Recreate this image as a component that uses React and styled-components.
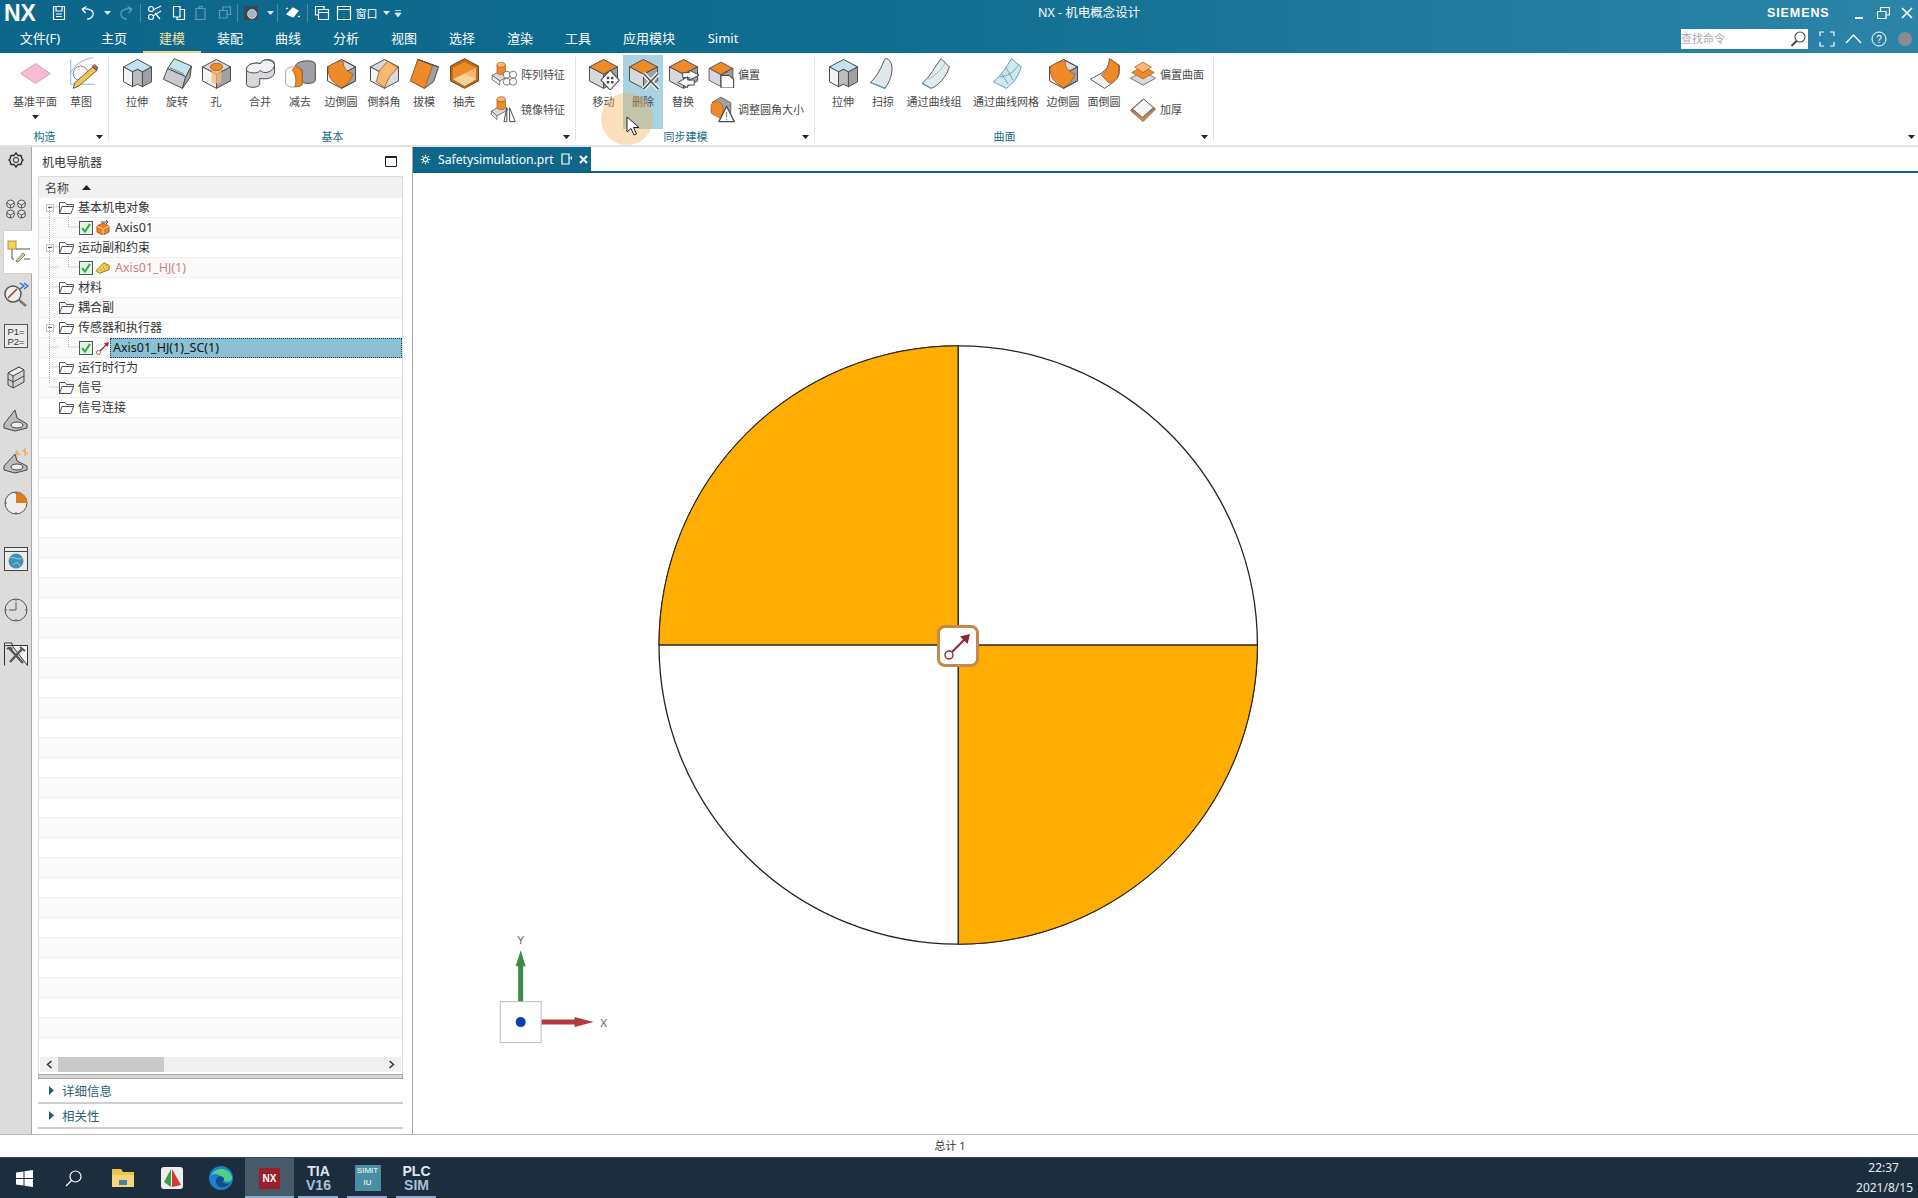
import React from 'react';
import styled, { createGlobalStyle } from 'styled-components';

const FONT = '"Noto Sans", "Noto Sans CJK SC", sans-serif';

const Global = createGlobalStyle`
  html, body { margin: 0; padding: 0; background: #fff; overflow: hidden; }
  body { font-family: ${FONT}; }
  * { box-sizing: border-box; }
`;

const Page = styled.div`
  width: 1918px; height: 1198px; display: flex; flex-direction: column; overflow: hidden;
`;
const Header = styled.header`
  height: 53px; flex: none; color: #fff;
  background: linear-gradient(90deg, #0c668a 0%, #106d90 45%, #2c85a8 100%);
`;
const TitleRow = styled.div`
  height: 26px; display: flex; align-items: center; position: relative;
`;
const Logo = styled.span`
  font: 700 23px/26px "Liberation Sans", sans-serif; width: 44px; padding-left: 4px; flex: none;
`;
const QuickSlot = styled.span`
  width: ${p => p.$w}px; flex: none; display: flex; align-items: center; justify-content: center;
  opacity: ${p => p.$dim ? 0.35 : 1}; font-size: 11px;
`;
const QuickSep = styled.i`
  width: 1px; height: 18px; background: rgba(255,255,255,.25); flex: none;
`;
const AppTitle = styled.span`
  font-size: 12.5px; line-height: 20px; width: 340px; flex: none; white-space: nowrap;
`;
const Brand = styled.span`
  font: 700 12.5px/20px "Liberation Sans", sans-serif; letter-spacing: .9px; width: 80px; flex: none;
`;
const WinBtn = styled.span`
  width: 24px; flex: none; display: flex; justify-content: center; align-items: center;
`;
const TabRow = styled.nav`
  height: 27px; display: flex; padding-left: 11px; align-items: stretch;
`;
const MenuTab = styled.span`
  width: ${p => p.$w || 58}px; margin-right: ${p => p.$mr || 0}px; flex: none; text-align: center;
  font-size: 13px; line-height: 25px; color: ${p => p.$on ? '#f2e2a0' : '#fff'};
  border-bottom: 2px solid ${p => p.$on ? '#e8d98f' : 'transparent'};
`;
const RightTools = styled.div`
  margin-left: auto; display: flex; align-items: center; height: 26px;
`;
const Search = styled.div`
  width: 127px; height: 20px; background: #fff; color: #aaa; font-size: 11px; line-height: 20px;
  display: flex; justify-content: space-between; align-items: center; margin-right: 6px; padding-right: 2px;
`;
const ToolIcon = styled.span`
  width: ${p => p.$w}px; flex: none; display: flex; justify-content: center; align-items: center;
`;
const Ribbon = styled.section`
  height: 94px; flex: none; display: flex; background: #fff; position: relative;
  border-bottom: 2px solid #e2e2e2;
`;
const Group = styled.div`
  width: ${p => p.$w}px; flex: none; display: flex; flex-direction: column; position: relative;
`;
const GroupRow = styled.div`
  height: 76px; display: flex; padding-left: ${p => p.$pl}px;
`;
const GroupFoot = styled.div`
  height: 16px; display: flex; align-items: center;
`;
const GroupLabel = styled.span`
  flex: 1; text-align: center; font-size: 11px; line-height: 16px; color: #1d6c86;
`;
const GroupDrop = styled.span`
  width: 20px; flex: none; display: flex; justify-content: center;
`;
const GroupSep = styled.i`
  position: absolute; right: 0; top: 4px; bottom: 4px; width: 1px; background: #e2e2e2;
`;
const BigBtn = styled.div`
  width: ${p => p.$w}px; flex: none; display: flex; flex-direction: column; align-items: center;
  padding-top: ${p => p.$hl ? 2 : 4}px; height: 74px; background: ${p => p.$hl ? '#a9d3e1' : 'transparent'};
  margin-top: ${p => p.$hl ? 2 : 0}px;
  font-size: 11px; line-height: 14px; color: #4a4a4a; white-space: nowrap;
  & > svg:first-child { flex: none; margin-bottom: 5px; }
`;
const BtnDrop = styled.span`
  display: flex; margin-top: 6px;
`;
const SideCol = styled.div`
  margin-left: ${p => p.$ml || 0}px; display: flex; flex-direction: column; gap: 6px; padding-top: 6px;
`;
const SideBtn = styled.div`
  display: flex; align-items: center; gap: 3px; height: 29px;
  font-size: 11px; color: #4a4a4a; white-space: nowrap;
`;
const CursorSpot = styled.i`
  position: absolute; left: 601px; top: 40px; width: 52px; height: 52px; border-radius: 50%;
  background: rgba(240,172,80,.38); z-index: 3;
`;
const CursorMark = styled.svg`
  position: absolute; left: 626px; top: 63px; z-index: 4;
`;
const RibbonDrop = styled.span`
  position: absolute; right: 3px; bottom: 6px; display: flex;
`;
const Main = styled.main`
  flex: 1; display: flex; min-height: 0;
`;
const Rail = styled.aside`
  width: 32px; flex: none; background: #dcdcdc; border-right: 1px solid #a8a8a8;
  display: flex; flex-direction: column; border-bottom: 1px solid #b8b8b8;
`;
const RailItem = styled.div`
  height: ${p => p.$h || 30}px; margin-top: ${p => p.$mt}px; flex: none;
  display: flex; align-items: center; justify-content: center;
  ${p => p.$on && 'background:#fff; margin-left:3px; margin-right:-1px; border:1px solid #cfcfcf; border-right:none;'}
`;
const NavPanel = styled.section`
  width: 381px; flex: none; background: #fff; border-right: 1px solid #a8a8a8; border-bottom: 1px solid #b8b8b8;
  display: flex; flex-direction: column; padding-bottom: 5px;
`;
const NavHead = styled.div`
  height: 29px; flex: none; display: flex; justify-content: space-between; align-items: center;
  padding: 0 15px 0 10px; font-size: 12px; color: #333;
`;
const Tree = styled.div`
  margin: 0 9px 0 6px; flex: 1; min-height: 0; display: flex; flex-direction: column;
  border: 1px solid #dcdcdc; border-bottom: none;
`;
const TreeHead = styled.div`
  height: 21px; flex: none; background: #f1f1f1; display: flex; align-items: center; gap: 13px;
  padding-left: 6px; font-size: 12px; color: #444;
`;
const TreeBody = styled.div`
  flex: 1; min-height: 0; overflow: hidden; position: relative;
`;
const TreeRow = styled.div`
  height: 20px; display: flex; align-items: center; position: relative;
  background: ${p => p.$odd ? '#fafafa' : '#fff'}; border-bottom: 1px solid #eeeeee;
  padding-left: ${p => p.$lvl ? 40 : 20}px; font-size: 12px; color: #333; white-space: nowrap;
`;
const Expander = styled.i`
  position: absolute; left: 7px; top: 6px; width: 8px; height: 8px; background: #fff;
  border: 1px solid #c4c4c4; font-style: normal;
  &::after { content: ''; position: absolute; left: 1px; top: 2px; width: 4px; height: 1px; background: #444; }
`;
const TreeIcon = styled.span`
  width: 14px; margin-left: 3px; flex: none; display: flex; justify-content: center;
`;
const RowLabel = styled.span`
  margin-left: ${p => p.$lvl ? 5 : 4}px; color: ${p => p.$red ? '#d67a82' : '#333'}; line-height: 20px; padding-right: 4px;
  font-size: ${p => p.$lvl ? 12.5 : 12}px;
`;
const SelFill = styled.span`
  position: absolute; left: 71px; right: 0; top: 0; bottom: -1px; background: #8cc0d4;
  border: 1px dotted #24424f; padding-left: 2px; color: #111; line-height: 18px; font-size: 12.5px;
`;
const TreeLines = styled.svg`
  position: absolute; left: 0; top: 0; pointer-events: none; z-index: 2;
`;
const HScroll = styled.div`
  height: 15px; margin: 2px 1px 2px 1px; flex: none; background: #f0f0f2; display: flex; align-items: center;
  justify-content: space-between; padding: 0 6px; position: relative;
`;
const Thumb = styled.i`
  position: absolute; left: 18px; width: 106px; top: 0; bottom: 0; background: #c9c9cc;
`;
const Splitter = styled.div`
  height: 5px; flex: none; margin: 0 9px 0 6px; background: #d6d6d6; border: 1px solid #a9a9a9;
`;
const Acc = styled.div`
  height: ${p => p.$h}px; flex: none; margin: 0 9px 0 6px; border-bottom: 2px solid #cfcfcf;
  display: flex; align-items: center; gap: 8px; padding-left: 11px;
  font-size: 12.5px; color: #2f6478;
`;
const Graphic = styled.section`
  flex: 1; display: flex; flex-direction: column; min-width: 0; background: #fff; border-bottom: 1px solid #b8b8b8;
`;
const DocStrip = styled.div`
  height: 26px; flex: none; border-bottom: 2px solid #0f5f7e; display: flex; align-items: flex-start;
`;
const DocTab = styled.div`
  width: 178px; height: 24px; background: #0f678a; color: #fff; font-size: 12.2px; display: flex;
  align-items: center; padding-left: 7px; gap: 7px; white-space: nowrap;
`;
const Viewport = styled.div`
  flex: 1; min-height: 0; position: relative;
`;
const ModelSvg = styled.svg`
  display: block; width: 100%; height: 100%;
`;
const Marker = styled.div`
  position: absolute; left: 524px; top: 452px; width: 42px; height: 42px; background: #fff;
  border: 3px solid #c38a4c; border-radius: 8px; display: flex; align-items: center; justify-content: center;
`;
const Status = styled.footer`
  height: 22px; flex: none; background: #fff; text-align: center; padding-right: 18px;
  font-size: 11px; line-height: 21px; color: #333;
`;
const Taskbar = styled.div`
  height: 41px; flex: none; background: #1c2d3e; display: flex; align-items: stretch; color: #fff;
  border-top: 1px solid #33465a;
`;
const TaskSlot = styled.div`
  width: 49px; flex: none; display: flex; align-items: center; justify-content: center; position: relative;
  background: ${p => p.$on ? '#465a68' : 'transparent'};
  ${p => p.$open && `&::after{content:'';position:absolute;left:${p.$on ? 0 : 4}px;right:${p.$on ? 0 : 5}px;bottom:0;height:2px;background:#8fa9cf;}`}
`;
const NxBadge = styled.span`
  width: 21px; height: 21px; background: #9a1f2b; font: 700 10px/21px "Liberation Sans", sans-serif; text-align: center; color: #fff;
`;
const StackText = styled.span`
  display: flex; flex-direction: column; align-items: center; font: 700 ${p => p.$s || 12}px/${p => p.$s || 12}px "Liberation Sans", sans-serif;
  color: ${p => p.$c || '#dfe7f0'};
  & b { color: #a9bfdc; }
`;
const SimitTile = styled.span`
  width: 26px; height: 26px; background: #4b8ea3; font: 400 8px/12px "Liberation Sans", sans-serif; color: #fff; text-align: center;
`;
const Clock = styled.div`
  margin-left: auto; padding: 0 5px 0 0; display: flex; flex-direction: column; align-items: flex-end; justify-content: center;
  font-size: 12px; line-height: 20px; color: #e8edf2;
  & span:first-child { padding-right: 14px; }
`;

/* ---------- drawings ---------- */
const O = '#ee8a28', OL = '#f7b873', G = '#d8d9dc', GD = '#9fa0a6', W = '#f2f3f5', B = '#c2e4ee', L = '#4b4b4b';

const I = ({ s = 33, children, v = '0 0 40 40' }) => (
  <svg width={s} height={s} viewBox={v} fill="none" strokeLinejoin="round">{children}</svg>
);
const Box = ({ t = G, l = W, r = GD }) => (
  <g stroke={L} strokeWidth="1.2">
    <path d="M20 3 37 12 20 21 3 12Z" fill={t} />
    <path d="M3 12 20 21V38L3 29Z" fill={l} />
    <path d="M37 12 20 21V38L37 29Z" fill={r} />
  </g>
);

const Extrude = ({ s }) => (
  <I s={s}><g stroke={L} strokeWidth="1.2">
    <path d="M20 3 37 12 26 18 20 15 14 18 3 12Z" fill={B} />
    <path d="M3 12 14 18V36L3 30Z" fill={W} />
    <path d="M14 18 20 15 26 18V36L20 33 14 36Z" fill="#bcbdc2" />
    <path d="M26 18 37 12V30L26 36Z" fill={GD} />
  </g></I>
);
const Revolve = () => (
  <I><g stroke={L} strokeWidth="1.2">
    <path d="M16 2 37 11 30 24 8 14Z" fill={B} />
    <path d="M8 14 30 24 26 38 3 27Z" fill="#c9cacd" />
    <path d="M30 24 37 11 35 25 26 38Z" fill={GD} />
    <path d="M11 13 28 21" stroke="#7a7a7a" />
  </g></I>
);
const Hole = () => (
  <I><Box />
    <path d="M14 13V30C17 33 23 33 26 30V13Z" fill={OL} opacity=".75" />
    <ellipse cx="20" cy="12" rx="7.5" ry="4.5" fill={O} stroke="#a65a12" /></I>
);
const Unite = () => (
  <I><g stroke={L} strokeWidth="1.2">
    <path d="M3 15V33C3 38 18 38 19 33V26C30 28 37 24 37 18V8C37 2 22 1 20 8 12 6 3 9 3 15Z" fill={G} />
    <path d="M3 15C3 20 18 21 20 16 23 22 37 18 37 9C35 3 22 1 20 8 12 6 3 9 3 15Z" fill={W} />
  </g></I>
);
const Subtract = () => (
  <I><g strokeWidth="1.2">
    <ellipse cx="11" cy="17" rx="9" ry="5" stroke="#aaa" fill="#fff" />
    <path d="M2 17V32C2 38 20 38 20 32V17" stroke="#aaa" fill="#fff" />
    <path d="M14 11C14 4 38 2 38 9V28C38 33 24 33 22 30V17C22 13 15 14 14 11Z" fill={GD} stroke={L} />
    <path d="M14 11C20 14 22 15 22 20V34C19 36 15 36 13 36 16 30 14 20 10 16Z" fill={O} stroke="#b0641b" />
  </g></I>
);
const Blend = () => (
  <I><Box l={W} r={GD} t={G} /><path d="M4 12C10 7 17 5 22 5 22 12 24 16 34 21 30 30 25 35 20 37 9 31 3 25 4 12Z" fill={O} stroke="#a65a12" /><path d="M20 3 37 12 37 29 20 38" stroke={L} strokeWidth="1.2" /></I>
);
const Chamfer = () => (
  <I><Box t={G} l={W} r={G} /><path d="M14 16 24 5 36 13 26 24 20 37 10 30Z" fill={OL} stroke="#a65a12" /></I>
);
const Draft = () => (
  <I><path d="M12 3 37 12 31 30 20 38 3 29Z" fill={GD} stroke={L} strokeWidth="1.2" /><path d="M12 3 30 10 20 38 3 29Z" fill={O} stroke="#a65a12" /><path d="M12 3 37 12 30 10Z" fill={G} stroke={L} /></I>
);
const Shell = () => (
  <I><path d="M20 2 37 11V29L20 38 3 29V11Z" fill="#b96a1f" stroke="#6b4a22" strokeWidth="1.2" /><path d="M20 6 34 13V27L20 35 6 27V13Z" fill={O} /><path d="M20 20 34 13V27L20 35Z" fill={OL} /><path d="M6 27 20 20 34 27 20 35Z" fill="#fad39a" /></I>
);
const Pattern = () => (
  <I s={28}><path d="M3 22 18 14 30 21 14 30Z" fill={G} stroke={L} /><path d="M3 22V28L14 36V30Z" fill={W} stroke={L} /><path d="M10 7V18C10 22 22 22 22 18V7Z" fill={O} stroke="#a65a12" /><ellipse cx="16" cy="7" rx="6" ry="3.5" fill={OL} stroke="#a65a12" />
    {[[24, 21], [33, 21], [24, 31], [33, 31]].map(([x, y]) => <circle key={x + '' + y} cx={x} cy={y} r="5" fill="#fff" stroke={L} />)}</I>
);
const Mirror = () => (
  <I s={28}><path d="M2 23 16 15 26 21 10 30Z" fill={G} stroke={L} /><path d="M2 23V28L10 35V30Z" fill={W} stroke={L} /><path d="M10 6V18C10 22 22 22 22 18V6Z" fill={O} stroke="#a65a12" /><ellipse cx="16" cy="6" rx="6" ry="3.5" fill={OL} stroke="#a65a12" /><path d="M20 38 24 18V38ZM28 38V18L36 38Z" fill="#fff" stroke={L} strokeWidth="1.4" /></I>
);
const Move = () => (
  <I><Box t={O} l={G} r={GD} /><path d="M28 16 39 28 28 40 17 28Z" fill="#fff" stroke={L} strokeWidth="1.3" /><path d="M24 24h3v3h-3zM29 24h3v3h-3zM24 29h3v3h-3zM29 29h3v3h-3z" fill={L} /></I>
);
const Del = () => (
  <I><Box t={O} l={G} r={GD} /><path d="M20 20 38 39M38 20 20 39" stroke="#fff" strokeWidth="5" /><path d="M20 20 38 39M38 20 20 39" stroke="#555" strokeWidth="2" /></I>
);
const Replace = () => (
  <I><Box t={O} l={G} r={GD} /><path d="M27 16 39 22 27 28V25H19V19H27ZM25 24 13 31 25 37V34H33V28H25Z" fill="#fff" stroke={L} strokeWidth="1.2" /></I>
);
const Offset = () => (
  <I s={28}><Box t={O} l={G} r={GD} /><path d="M20 22H32L38 28V40H20Z" fill="#fff" stroke={L} strokeWidth="1.6" /><path d="M26 17H30" stroke={L} /></I>
);
const Resize = () => (
  <I s={28}><path d="M8 10 20 3 34 11 34 26 20 32 6 24Z" fill={GD} stroke={L} /><path d="M6 14C8 8 18 8 22 14 24 20 22 30 20 34L6 26Z" fill={O} stroke="#a65a12" /><path d="M28 16 39 38H17Z" fill="#fff" stroke={L} strokeWidth="1.8" /><path d="M28 24V32M28 34V36" stroke={L} /></I>
);
const Sweep = () => (
  <I><path d="M24 2C30 4 31 12 30 18 29 28 24 34 22 38L4 31C10 26 16 16 20 6 21 3 22 2 24 2Z" fill="#e0e8ec" stroke={L} strokeWidth="1.1" /><path d="M4 31 22 38" stroke="#4aa6c0" strokeWidth="1.4" /></I>
);
const ThruCurves = () => (
  <I><path d="M28 2 38 12C34 24 26 34 16 38L5 32C15 24 20 12 28 2Z" fill="#e3ebef" stroke={L} strokeWidth="1.1" /><path d="M12 27C20 24 29 15 33 7" stroke="#8fb6c4" /><path d="M5 32 16 38" stroke="#4aa6c0" strokeWidth="1.4" /></I>
);
const Mesh = () => (
  <I><path d="M26 2 38 12C34 24 28 32 20 38L4 30C14 22 20 12 26 2Z" fill="#cfe8f0" stroke="#5b94a8" strokeWidth="1.1" /><path d="M12 24C20 24 30 18 34 10M19 12 28 28M14 20 22 33" stroke="#5b94a8" /></I>
);
const FaceBlend = () => (
  <I><path d="M20 38 3 27 17 19C24 14 26 8 26 2L38 10V18C38 26 30 32 20 38Z" fill="#f3f3f4" stroke={L} strokeWidth="1.1" /><path d="M26 2 37 10V20C36 26 30 30 26 32L16 22C24 16 26 8 26 2Z" fill={O} stroke="#a65a12" /></I>
);
const OffsetSurf = () => (
  <I s={28}><path d="M2 26 20 16 38 26 20 36Z" fill={G} stroke={L} /><path d="M4 18 20 9 36 18 20 27Z" fill={O} stroke="#a65a12" /><path d="M8 10 20 3 32 10 20 18Z" fill={OL} stroke="#a65a12" /></I>
);
const Thicken = () => (
  <I s={28}><path d="M2 22 20 6 38 20 20 38Z" fill="#b7784b" stroke={L} /><path d="M5 20 21 6 35 18 19 32Z" fill="#f5f5f5" stroke={L} /><path d="M2 22 20 38 38 20 20 33Z" fill="#c98a55" /></I>
);
const DatumPlane = () => (
  <I><path d="M20 8 38 20 20 32 2 20Z" fill="#f7bcd4" stroke="#d98cab" strokeWidth="1" /></I>
);
const Sketch = () => (
  <I><path d="M34 1C22 2 12 9 6 20M7 3V33H36" stroke="#6fb0c4" strokeWidth="1" /><circle cx="19" cy="20" r="9" stroke="#666" /><path d="M34 12 39 16 17 35 10 38 12 31Z" fill="#f1c64d" stroke={L} /><path d="M33 12 36 9 40 13 38 16Z" fill="#d9534f" stroke={L} /></I>
);
const SmallDrop = ({ c = '#222' }) => (
  <svg width="7" height="4" viewBox="0 0 7 4"><path d="M0 0H7L3.5 4Z" fill={c} /></svg>
);
const Stroke = ({ w = 16, h = 16, v, children, c = '#fff', sw = 1.2 }) => (
  <svg width={w} height={h} viewBox={v || `0 0 ${w} ${h}`} fill="none" stroke={c} strokeWidth={sw}>{children}</svg>
);
const Folder = () => (
  <Stroke w={15} h={13} c="#555" sw="1"><path d="M.5 12.5V1.5H6L7.5 3.5H14.5V5.5M.5 12.5 3 5.5H14.5L12 12.5Z" /></Stroke>
);
const Check = () => (
  <svg width="14" height="14" viewBox="0 0 14 14"><rect x=".5" y=".5" width="13" height="13" fill="#dff5e2" stroke="#555" /><path d="M3 7 6 10.5 11 3" fill="none" stroke="#35a853" strokeWidth="2" /></svg>
);
const ObjCube = () => (
  <svg width="14" height="15" viewBox="0 0 14 15"><path d="M1 6 7 3 13 6V12L7 15 1 12Z" fill="#ee7f22" stroke="#b05a10" /><path d="M1 6 7 9 13 6M7 9V15" stroke="#ffd9a8" fill="none" /><path d="M5 2H12M10 0 12 2 10 4" stroke="#555" fill="none" /></svg>
);
const Joint = () => (
  <svg width="15" height="14" viewBox="0 0 16 14"><path d="M0 10 9 1 15 4 15 9 4 13Z" fill="#f1cf4c" stroke="#8b6d12" /><path d="M5 9h1M8 6h1M11 4h1M9 9h1M12 7h1" stroke="#7a5b10" /></svg>
);
const SpeedArrow = ({ s = 14, c = '#a5262e', w = 1.2, r = 2 }) => (
  <svg width={s} height={s} viewBox="0 0 14 14" fill="none"><circle cx="2.5" cy="11.5" r={r} stroke={c === '#a5262e' ? '#8a2730' : c} strokeWidth=".7" fill="#fff" /><path d="M4 10 11 3" stroke={c} strokeWidth={w} /><path d="M13 1 11.8 6 8 2.2Z" fill={c} /></svg>
);

const railIcons = [
  { mt: 0, h: 26, el: <svg width="16" height="16" viewBox="0 0 16 16" fill="none"><path d="M8 1 10 3.5H13L14 7 15 8 14 9 13 12.5H10L8 15 6 12.5H3L2 9 1 8 2 7 3 3.5H6Z" stroke="#333" strokeWidth="1.4" /><circle cx="8" cy="8" r="2.6" stroke="#333" /></svg> },
  { mt: 21, el: <svg width="22" height="20" viewBox="0 0 22 20" fill="#e4e4e4" stroke="#555"><circle cx="5.5" cy="5" r="4" /><circle cx="16.5" cy="5" r="4" /><circle cx="5.5" cy="15" r="4" /><circle cx="16.5" cy="15" r="4" /><path d="M2 4 5.5 6 9 4M13 4l3.5 2L20 4M2 14l3.5 2L9 14M13 14l3.5 2L20 14M5.5 6V9M16.5 6V9M5.5 16V19M16.5 16V19" fill="none" /></svg> },
  { mt: 6, h: 44, on: true, el: <svg width="24" height="24" viewBox="0 0 24 24" fill="none"><rect x="2" y="1" width="8" height="8" fill="#f1d45b" stroke="#b89a2e" /><path d="M6 9V19H8M10 9H24M18 19H24" stroke="#555" /><path d="M10 21 17 13 19 15 12 22Z" fill="#e8d27a" stroke="#777" /></svg> },
  { mt: 5, el: <svg width="26" height="26" viewBox="0 0 26 26" fill="none"><circle cx="10" cy="13" r="8" fill="#eee" stroke="#555" strokeWidth="1.4" /><path d="M5 17 14 8" stroke="#b3392f" strokeWidth="1.6" /><path d="M16 19 23 25" stroke="#777" strokeWidth="2.4" /><path d="M17 2 21 5 17 8M21 2 25 5 21 8" stroke="#2d62c4" strokeWidth="1.3" /></svg> },
  { mt: 12, el: <svg width="24" height="24" viewBox="0 0 24 24"><rect x=".5" y=".5" width="23" height="23" fill="#ececec" stroke="#555" /><text x="12" y="10.5" textAnchor="middle" fontSize="9.5" fill="#333" fontFamily="Liberation Sans">P1=</text><text x="12" y="21" textAnchor="middle" fontSize="9.5" fill="#333" fontFamily="Liberation Sans">P2=</text></svg> },
  { mt: 11, el: <svg width="20" height="24" viewBox="0 0 20 24" stroke="#444" fill="#d4d4d4"><path d="M2 8 13 2 18 5V17L7 23 2 20Z" /><path d="M2 8 7 11 18 5 13 2Z" fill="#efefef" /><path d="M7 11V23M2 14 7 17 18 11" fill="none" /></svg> },
  { mt: 13, el: <svg width="26" height="24" viewBox="0 0 26 24" stroke="#444" fill="#bdbdbd"><path d="M1 16 12 2 14 10 24 16 24 20 12 23 1 20Z" /><ellipse cx="14" cy="17" rx="6" ry="3" fill="#eee" /></svg> },
  { mt: 11, el: <svg width="26" height="28" viewBox="0 0 26 28" stroke="#444" fill="#bdbdbd"><path d="M1 19 12 7 14 14 24 19 24 23 12 26 1 23Z" /><ellipse cx="14" cy="20" rx="6" ry="3" fill="#eee" /><path d="M14 3V10M12 5 18 8M22 1 22 9M19 3 25 7" stroke="#ef9a45" fill="none" /></svg> },
  { mt: 12, el: <svg width="24" height="24" viewBox="0 0 24 24"><circle cx="12" cy="12" r="11" fill="#eee" stroke="#555" /><path d="M12 1A11 11 0 0 1 23 12H12Z" fill="#e07b22" /><path d="M12 1V3M12 21V23M1 12H3" stroke="#555" /></svg> },
  { mt: 26, el: <svg width="24" height="24" viewBox="0 0 24 24"><rect x=".5" y=".5" width="23" height="23" fill="#ececec" stroke="#444" /><path d="M0 4.5H24" stroke="#444" /><circle cx="12" cy="14" r="7.5" fill="#3f93b5" /><path d="M6 11C10 9 14 14 18 11M9 18C11 15 15 15 16 19" stroke="#9fd3e5" fill="none" /></svg> },
  { mt: 21, el: <svg width="24" height="24" viewBox="0 0 24 24" fill="none" stroke="#555"><circle cx="12" cy="12" r="11" /><path d="M12 4V12H5M12 1V3M12 21V23M1 12H3M21 12H23" /></svg> },
  { mt: 14, el: <svg width="24" height="24" viewBox="0 0 24 24" fill="none"><path d="M.5 23.5V3.5H8V1H.5V3.5M8 3.5H23.5V23.5Z" fill="#f3f3f3" stroke="#333" /><path d="M5 6 19 21M18 7 6 20" stroke="#555" strokeWidth="2.4" /><path d="M3 7C6 4 9 7 7 9M16 5 21 9" stroke="#555" strokeWidth="2" /></svg> },
];

const tabs = [
  { t: '文件(F)', mr: 16 }, { t: '主页' }, { t: '建模', on: true }, { t: '装配' }, { t: '曲线' }, { t: '分析' },
  { t: '视图' }, { t: '选择' }, { t: '渲染' }, { t: '工具' }, { t: '应用模块', w: 84 }, { t: 'Simit', w: 64 },
];

const rows = [
  { lbl: '基本机电对象', exp: true },
  { lbl: 'Axis01', lvl: 1, icon: <ObjCube /> },
  { lbl: '运动副和约束', exp: true },
  { lbl: 'Axis01_HJ(1)', lvl: 1, icon: <Joint />, red: true },
  { lbl: '材料' },
  { lbl: '耦合副' },
  { lbl: '传感器和执行器', exp: true },
  { lbl: 'Axis01_HJ(1)_SC(1)', lvl: 1, sel: true, icon: <SpeedArrow /> },
  { lbl: '运行时行为' },
  { lbl: '信号' },
  { lbl: '信号连接' },
];
const allRows = Array.from({ length: 43 }, (_, i) => rows[i] || {});

const Acrow = () => (
  <svg width="5" height="9" viewBox="0 0 5 9"><path d="M0 0 5 4.5 0 9Z" fill="#1f5f75" /></svg>
);

export default function App() {
  return (
    <Page>
      <Global />
      <Header>
        <TitleRow>
          <Logo>NX</Logo>
          <QuickSlot $w={30}><Stroke><path d="M2.5 1.5H13.5V14.5H2.5ZM5 1.5V6H11V1.5M5 9H11M5 11.5H11" /></Stroke></QuickSlot>
          <QuickSlot $w={28}><Stroke><path d="M2 4 5.5 8M2 4 6.5 1.5M2 4C10 3 14 6 13 10 12 13 9 14 7 14" /></Stroke></QuickSlot>
          <QuickSlot $w={10}><SmallDrop c="#dbe9ef" /></QuickSlot>
          <QuickSlot $w={28} $dim><Stroke><path d="M14 4 10.5 8M14 4 9.5 1.5M14 4C6 3 2 6 3 10 4 13 7 14 9 14" /></Stroke></QuickSlot>
          <QuickSep />
          <QuickSlot $w={28}><Stroke><circle cx="4" cy="4" r="2.5" /><circle cx="4" cy="12" r="2.5" /><path d="M6 5 14 1M6 11 14 6M8 8 13 14" /></Stroke></QuickSlot>
          <QuickSlot $w={20}><Stroke><path d="M2.5 1.5H9V12H2.5ZM9 4.5H13.5V14.5H6V12" /></Stroke></QuickSlot>
          <QuickSlot $w={24} $dim><Stroke><path d="M3 3.5H12V14.5H3ZM6 3.5V1.5H9V3.5" /></Stroke></QuickSlot>
          <QuickSlot $w={24} $dim><Stroke><path d="M2.5 5.5H10V13H2.5ZM6 5.5V2H13.5V9.5H10" /></Stroke></QuickSlot>
          <QuickSep />
          <QuickSlot $w={25}><svg width="16" height="16" viewBox="0 0 16 16"><rect x="1" y="1" width="14" height="14" fill="#3b4650" /><circle cx="9" cy="9" r="4.5" fill="#9fb7c2" stroke="#fff" strokeWidth=".6" /></svg></QuickSlot>
          <QuickSlot $w={14}><SmallDrop c="#dbe9ef" /></QuickSlot>
          <QuickSep />
          <QuickSlot $w={29}><Stroke><path d="M2 9 8 3 13 6 8 12Z" fill="#fff" /><path d="M1 4 3 3M13 12 15 11" /></Stroke></QuickSlot>
          <QuickSep />
          <QuickSlot $w={27}><Stroke><path d="M1.5 1.5H10V4M1.5 1.5V10H4.5M4.5 4.5H14.5V14.5H4.5ZM4.5 7.5H14.5" /></Stroke></QuickSlot>
          <QuickSlot $w={18}><Stroke><path d="M1.5 1.5H14.5V14.5H1.5ZM1.5 4.5H14.5" /></Stroke></QuickSlot>
          <QuickSlot $w={27}>窗口</QuickSlot>
          <QuickSlot $w={12}><SmallDrop c="#dbe9ef" /></QuickSlot>
          <QuickSlot $w={12}><svg width="8" height="7" viewBox="0 0 8 7"><path d="M1 .5H7M1 3H7L4 7Z" fill="#dbe9ef" stroke="#dbe9ef" strokeWidth=".8" /></svg></QuickSlot>
          <QuickSlot $w={634} />
          <AppTitle>NX - 机电概念设计</AppTitle>
          <QuickSlot $w={389} />
          <Brand>SIEMENS</Brand>
          <WinBtn><Stroke w={10} h={12} sw="2"><path d="M1 11H9" /></Stroke></WinBtn>
          <WinBtn><Stroke w={13} h={12}><path d="M.5 4.5H9V11.5H.5ZM3.5 4.5V.5H12.5V8H9" /></Stroke></WinBtn>
          <WinBtn><Stroke w={12} h={12} sw="1.6"><path d="M1 1 11 11M11 1 1 11" /></Stroke></WinBtn>
        </TitleRow>
        <TabRow>
          {tabs.map(t => <MenuTab key={t.t} $on={t.on} $w={t.w} $mr={t.mr}>{t.t}</MenuTab>)}
          <RightTools>
            <Search>查找命令
              <svg width="16" height="17" viewBox="0 0 16 17" fill="none" stroke="#444"><circle cx="10" cy="6" r="5" strokeWidth="1.1" /><path d="M6.5 10 1.5 15" strokeWidth="2" /></svg>
            </Search>
            <ToolIcon $w={26}><Stroke><path d="M1 5V1H5M11 1H15V5M15 11V15H11M5 15H1V11" /></Stroke></ToolIcon>
            <ToolIcon $w={26}><Stroke w={17} h={10} sw="1.3"><path d="M1 9 8.5 1 16 9" /></Stroke></ToolIcon>
            <ToolIcon $w={26}><svg width="16" height="16" viewBox="0 0 16 16" fill="none" stroke="#fff"><circle cx="8" cy="8" r="7" /><text x="8" y="11.5" fontSize="10" fill="#fff" stroke="none" textAnchor="middle" fontFamily="Liberation Sans">?</text></svg></ToolIcon>
            <ToolIcon $w={26}><svg width="14" height="14"><circle cx="7" cy="7" r="7" fill="#8c8a92" /></svg></ToolIcon>
          </RightTools>
        </TabRow>
      </Header>

      <Ribbon>
        <Group $w={109}>
          <GroupRow $pl={9}>
            <BigBtn $w={52}><DatumPlane />基准平面<BtnDrop><SmallDrop /></BtnDrop></BigBtn>
            <BigBtn $w={40}><Sketch />草图</BigBtn>
          </GroupRow>
          <GroupFoot><GroupLabel>构造</GroupLabel><GroupDrop><SmallDrop /></GroupDrop></GroupFoot>
          <GroupSep />
        </Group>
        <Group $w={467}>
          <GroupRow $pl={8}>
            <BigBtn $w={40}><Extrude />拉伸</BigBtn>
            <BigBtn $w={40}><Revolve />旋转</BigBtn>
            <BigBtn $w={38}><Hole />孔</BigBtn>
            <BigBtn $w={50}><Unite />合并</BigBtn>
            <BigBtn $w={30}><Subtract />减去</BigBtn>
            <BigBtn $w={52}><Blend />边倒圆</BigBtn>
            <BigBtn $w={34}><Chamfer />倒斜角</BigBtn>
            <BigBtn $w={46}><Draft />拔模</BigBtn>
            <BigBtn $w={34}><Shell />抽壳</BigBtn>
            <SideCol $ml={9}>
              <SideBtn><Pattern />阵列特征</SideBtn>
              <SideBtn><Mirror />镜像特征</SideBtn>
            </SideCol>
          </GroupRow>
          <GroupFoot><GroupLabel>基本</GroupLabel><GroupDrop><SmallDrop /></GroupDrop></GroupFoot>
          <GroupSep />
        </Group>
        <Group $w={239}>
          <GroupRow $pl={8}>
            <BigBtn $w={39}><Move />移动</BigBtn>
            <BigBtn $w={40} $hl><Del />删除</BigBtn>
            <BigBtn $w={40}><Replace />替换</BigBtn>
            <SideCol $ml={4}>
              <SideBtn><Offset />偏置</SideBtn>
              <SideBtn><Resize />调整圆角大小</SideBtn>
            </SideCol>
          </GroupRow>
          <GroupFoot><GroupLabel>同步建模</GroupLabel><GroupDrop><SmallDrop /></GroupDrop></GroupFoot>
          <GroupSep />
        </Group>
        <Group $w={399}>
          <GroupRow $pl={8}>
            <BigBtn $w={40}><Extrude />拉伸</BigBtn>
            <BigBtn $w={40}><Sweep />扫掠</BigBtn>
            <BigBtn $w={62}><ThruCurves />通过曲线组</BigBtn>
            <BigBtn $w={82}><Mesh />通过曲线网格</BigBtn>
            <BigBtn $w={32}><Blend />边倒圆</BigBtn>
            <BigBtn $w={50}><FaceBlend />面倒圆</BigBtn>
            <SideCol>
              <SideBtn><OffsetSurf />偏置曲面</SideBtn>
              <SideBtn><Thicken />加厚</SideBtn>
            </SideCol>
          </GroupRow>
          <GroupFoot><GroupLabel>曲面</GroupLabel><GroupDrop><SmallDrop /></GroupDrop></GroupFoot>
          <GroupSep />
        </Group>
        <RibbonDrop><SmallDrop /></RibbonDrop>
        <CursorSpot />
        <CursorMark width="15" height="20" viewBox="0 0 15 20"><path d="M1 1V16L5 12.5 8 19 10.5 18 7.5 11.5H13Z" fill="#fff" stroke="#222" /></CursorMark>
      </Ribbon>

      <Main>
        <Rail>
          {railIcons.map((r, i) => <RailItem key={i} $mt={r.mt} $h={r.h} $on={r.on}>{r.el}</RailItem>)}
        </Rail>
        <NavPanel>
          <NavHead>机电导航器
            <svg width="12" height="11" viewBox="0 0 12 11" fill="none" stroke="#222"><path d="M.5.5H11.5V10.5H.5Z" /><path d="M0 1.5H12" /></svg>
          </NavHead>
          <Tree>
            <TreeHead>名称<svg width="9" height="5" viewBox="0 0 9 5"><path d="M0 5 4.5 0 9 5Z" fill="#222" /></svg></TreeHead>
            <TreeBody>
              <TreeLines width="80" height="240" viewBox="0 0 80 240" fill="none" stroke="#aaa" strokeDasharray="1 1">
                <path d="M10.5 8V185M10.5 189H20M10.5 69H20M10.5 89H20M10.5 129V130M10.5 149H20M10.5 169H20M10.5 9H20M10.5 49H20" />
                <path d="M29.5 18V29H40M29.5 58V69H40M29.5 138V149H40" />
              </TreeLines>
              {allRows.map((r, i) => (
                <TreeRow key={i} $odd={i % 2 === 1} $lvl={r.lvl}>
                  {r.exp && <Expander />}
                  {r.lbl && r.lvl ? <Check /> : null}
                  {r.lbl && !r.lvl ? <Folder /> : null}
                  {r.icon && <TreeIcon>{r.icon}</TreeIcon>}
                  {r.lbl && !r.sel && <RowLabel $red={r.red} $lvl={r.lvl}>{r.lbl}</RowLabel>}
                  {r.sel && <SelFill>{r.lbl}</SelFill>}
                </TreeRow>
              ))}
            </TreeBody>
            <HScroll>
              <Thumb />
              <Stroke w={7} h={9} c="#333" sw="1.5"><path d="M5.5 1 1.5 4.5 5.5 8" /></Stroke>
              <Stroke w={7} h={9} c="#333" sw="1.5"><path d="M1.5 1 5.5 4.5 1.5 8" /></Stroke>
            </HScroll>
          </Tree>
          <Splitter />
          <Acc $h={25}><Acrow />详细信息</Acc>
          <Acc $h={25}><Acrow />相关性</Acc>
        </NavPanel>
        <Graphic>
          <DocStrip>
            <DocTab>
              <svg width="11" height="11" viewBox="0 0 16 16" fill="none" stroke="#fff" strokeWidth="1.6"><circle cx="8" cy="8" r="3" /><path d="M8 1V4M8 12V15M1 8H4M12 8H15M3 3 5 5M11 11 13 13M13 3 11 5M5 11 3 13" /></svg>
              Safetysimulation.prt
              <svg width="11" height="12" viewBox="0 0 11 12" fill="none" stroke="#fff" strokeWidth="1.2"><path d="M1 1H8V11H1ZM8 5H11M11 3V7" /></svg>
              <svg width="9" height="9" viewBox="0 0 9 9" stroke="#fff" strokeWidth="2"><path d="M1 1 8 8M8 1 1 8" /></svg>
            </DocTab>
          </DocStrip>
          <Viewport>
            <ModelSvg viewBox="413 173 1505 962">
              <circle cx="958" cy="645.5" r="299.5" fill="#fff" stroke="#222" strokeWidth="1.3" />
              <path d="M958 645.5V346A299.5 299.5 0 0 0 658.5 645.5Z" fill="#ffad00" stroke="#222" />
              <path d="M958 645.5H1257.5A299.5 299.5 0 0 1 958 945Z" fill="#ffad00" stroke="#222" />
              <path d="M958 346V945M658.5 645.5H1257.5" stroke="#222" strokeWidth="1" />
              <rect x="499.5" y="1002.5" width="41" height="41" fill="#fff" stroke="#bbb" />
              <circle cx="520" cy="1023" r="5" fill="#0f3fb0" />
              <path d="M517.5 1002V967H515L520 951 525 967H522.5V1002Z" fill="#3d8a4a" />
              <path d="M541 1020.5H574V1018L593 1023 574 1028V1025.5H541Z" fill="#b23a3f" />
              <text x="520" y="945" fontSize="11" textAnchor="middle" fill="#666" fontFamily="Liberation Sans">Y</text>
              <text x="603" y="1028" fontSize="11" textAnchor="middle" fill="#666" fontFamily="Liberation Sans">X</text>
            </ModelSvg>
            <Marker><SpeedArrow s={28} c="#8e2430" w="1" r="2" /></Marker>
          </Viewport>
        </Graphic>
      </Main>

      <Status>总计 1</Status>

      <Taskbar>
        <TaskSlot><svg width="17" height="17" viewBox="0 0 17 17" fill="#fff"><path d="M0 2.5 7.5 1.4V8H0ZM8.5 1.2 17 0V8H8.5ZM0 9H7.5V15.6L0 14.5ZM8.5 9H17V17L8.5 15.8Z" /></svg></TaskSlot>
        <TaskSlot><svg width="17" height="17" viewBox="0 0 17 17" fill="none" stroke="#fff" strokeWidth="1.2"><circle cx="10.5" cy="6.5" r="5.5" /><path d="M6.5 10.5 1 16" /></svg></TaskSlot>
        <TaskSlot><svg width="22" height="18" viewBox="0 0 22 18"><path d="M0 0H9L11 3H22V18H0Z" fill="#eec24c" /><path d="M0 6H22V18H0Z" fill="#f5d77a" /><rect x="7" y="11" width="8" height="5" fill="#4a7fa5" /></svg></TaskSlot>
        <TaskSlot><svg width="22" height="22" viewBox="0 0 22 22"><rect width="22" height="22" rx="3" fill="#eee" /><path d="M10 2 3 15 10 20Z" fill="#3a9d4a" /><path d="M11 2 20 18 11 20Z" fill="#d8382e" /></svg></TaskSlot>
        <TaskSlot><svg width="24" height="24" viewBox="0 0 24 24"><circle cx="12" cy="12" r="12" fill="#1c7fd0" /><path d="M2 10C5 1 20 0 23 11 24 17 15 17 13 13 12 9 6 6 2 10Z" fill="#4fd08a" /><path d="M7 15C7 9 15 9 15 13 15 15 14 15 13 16 16 18 19 18 21 17 16 24 7 22 7 15Z" fill="#0f4c8a" /></svg></TaskSlot>
        <TaskSlot $on $open><NxBadge>NX</NxBadge></TaskSlot>
        <TaskSlot $open><StackText $s={14}><span>TIA</span><b>V16</b></StackText></TaskSlot>
        <TaskSlot $open><SimitTile>SIMIT<br />IU</SimitTile></TaskSlot>
        <TaskSlot $open><StackText $s={14}><span>PLC</span><b>SIM</b></StackText></TaskSlot>
        <Clock><span>22:37</span><span>2021/8/15</span></Clock>
      </Taskbar>
    </Page>
  );
}
